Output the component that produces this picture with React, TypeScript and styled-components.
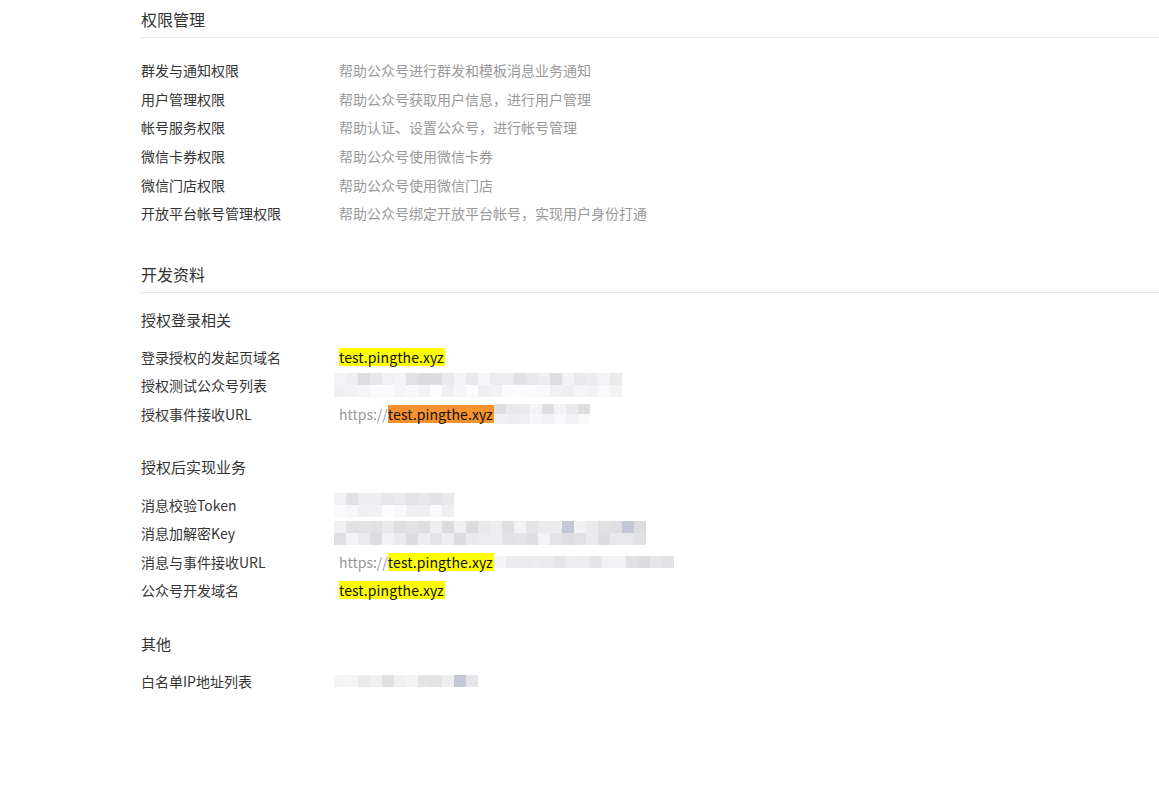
import React from 'react'
import styled, {createGlobalStyle} from 'styled-components'

const GlobalStyle = createGlobalStyle`
  body {
    margin: 0;
    background: #fff;
    font-family: "Noto Sans CJK SC", "Noto Sans", sans-serif;
    color: #333;
  }
`

const Page = styled.div`
  padding: 0 0 0 141px;
`

const Section = styled.section<{$gap?: number}>`
  margin-top: ${p => p.$gap ?? 0}px;
`

const SectionTitle = styled.h2`
  margin: 0;
  padding: 8px 0 7px;
  font-size: 16px;
  line-height: 22px;
  font-weight: 400;
  color: #333;
  border-bottom: 1px solid #e7e7e7;
`

const List = styled.div<{$top?: number}>`
  padding-top: ${p => p.$top ?? 0}px;
`

const SubTitle = styled.h3<{$gap: number}>`
  margin: ${p => p.$gap}px 0 12px;
  font-size: 15px;
  line-height: 22px;
  font-weight: 400;
  color: #333;
`

const Row = styled.div`
  display: flex;
  align-items: center;
  height: 28.6px;
  font-size: 14px;
`

const Label = styled.div`
  width: 198px;
  flex-shrink: 0;
  color: #353535;
`

const Desc = styled.div`
  color: #999;
`

const Value = styled.div`
  display: flex;
  align-items: center;
  color: #999;
`

const Mark = styled.span<{$tone: 'yellow' | 'orange'}>`
  display: inline-block;
  padding-right: 1px;
  line-height: 18px;
  letter-spacing: 0.1px;
  color: #111;
  background: ${p => (p.$tone === 'yellow' ? '#ffff00' : '#f8922e')};
`

const MosaicGrid = styled.div<{$cols: number; $w: number; $h: number; $shift?: boolean}>`
  display: grid;
  grid-template-columns: repeat(${p => p.$cols}, ${p => p.$w}px);
  grid-auto-rows: ${p => p.$h}px;
  margin-left: ${p => (p.$shift ? -5 : 0)}px;
`

const Cell = styled.div``

// pseudo-random grey for the pixelated (redacted) values
function shade(seed: number, i: number, cols: number, light: boolean) {
  const r = Math.abs(Math.sin(seed * 97.13 + i * 12.9898) * 43758.5453) % 1
  const base = light ? 238 : 220
  const v = Math.round(base + r * (light ? 14 : 26))
  const col = i % cols
  if (!light && r > 0.9 && col > cols * 0.7) return 'rgb(196,200,214)'
  return `rgb(${v},${v},${Math.min(255, v + 2)})`
}

function Mosaic({
  seed,
  cols,
  rows,
  w = 12,
  h = 12,
  shift,
  lightLast
}: {
  seed: number
  cols: number
  rows: number
  w?: number
  h?: number
  shift?: boolean
  lightLast?: boolean
}) {
  const cells = []
  for (let i = 0; i < cols * rows; i++) {
    const light = !!lightLast && i >= cols
    cells.push(<Cell key={i} style={{background: shade(seed, i, cols, light)}} />)
  }
  return (
    <MosaicGrid $cols={cols} $w={w} $h={h} $shift={shift}>
      {cells}
    </MosaicGrid>
  )
}

const perms = [
  ['群发与通知权限', '帮助公众号进行群发和模板消息业务通知'],
  ['用户管理权限', '帮助公众号获取用户信息，进行用户管理'],
  ['帐号服务权限', '帮助认证、设置公众号，进行帐号管理'],
  ['微信卡券权限', '帮助公众号使用微信卡券'],
  ['微信门店权限', '帮助公众号使用微信门店'],
  ['开放平台帐号管理权限', '帮助公众号绑定开放平台帐号，实现用户身份打通']
]

const DOMAIN = 'test.pingthe.xyz'

export default function App() {
  return (
    <Page>
      <GlobalStyle />
      <Section>
        <SectionTitle>权限管理</SectionTitle>
        <List $top={18}>
          {perms.map(([name, desc]) => (
            <Row key={name}>
              <Label>{name}</Label>
              <Desc>{desc}</Desc>
            </Row>
          ))}
        </List>
      </Section>

      <Section $gap={27}>
        <SectionTitle>开发资料</SectionTitle>

        <SubTitle $gap={16}>授权登录相关</SubTitle>
        <List>
          <Row>
            <Label>登录授权的发起页域名</Label>
            <Value>
              <Mark $tone="yellow">{DOMAIN}</Mark>
            </Value>
          </Row>
          <Row>
            <Label>授权测试公众号列表</Label>
            <Value>
              <Mosaic seed={1} cols={24} rows={2} shift lightLast />
            </Value>
          </Row>
          <Row>
            <Label>授权事件接收URL</Label>
            <Value>
              https://<Mark $tone="orange">{DOMAIN}</Mark>
              <Mosaic seed={2} cols={8} rows={2} h={10} lightLast />
            </Value>
          </Row>
        </List>

        <SubTitle $gap={28}>授权后实现业务</SubTitle>
        <List>
          <Row>
            <Label>消息校验Token</Label>
            <Value>
              <Mosaic seed={3} cols={10} rows={2} shift lightLast />
            </Value>
          </Row>
          <Row>
            <Label>消息加解密Key</Label>
            <Value>
              <Mosaic seed={4} cols={26} rows={2} shift />
            </Value>
          </Row>
          <Row>
            <Label>消息与事件接收URL</Label>
            <Value>
              https://<Mark $tone="yellow">{DOMAIN}</Mark>
              <Mosaic seed={5} cols={15} rows={1} />
            </Value>
          </Row>
          <Row>
            <Label>公众号开发域名</Label>
            <Value>
              <Mark $tone="yellow">{DOMAIN}</Mark>
            </Value>
          </Row>
        </List>

        <SubTitle $gap={28}>其他</SubTitle>
        <List>
          <Row>
            <Label>白名单IP地址列表</Label>
            <Value>
              <Mosaic seed={6} cols={12} rows={1} shift />
            </Value>
          </Row>
        </List>
      </Section>
    </Page>
  )
}
